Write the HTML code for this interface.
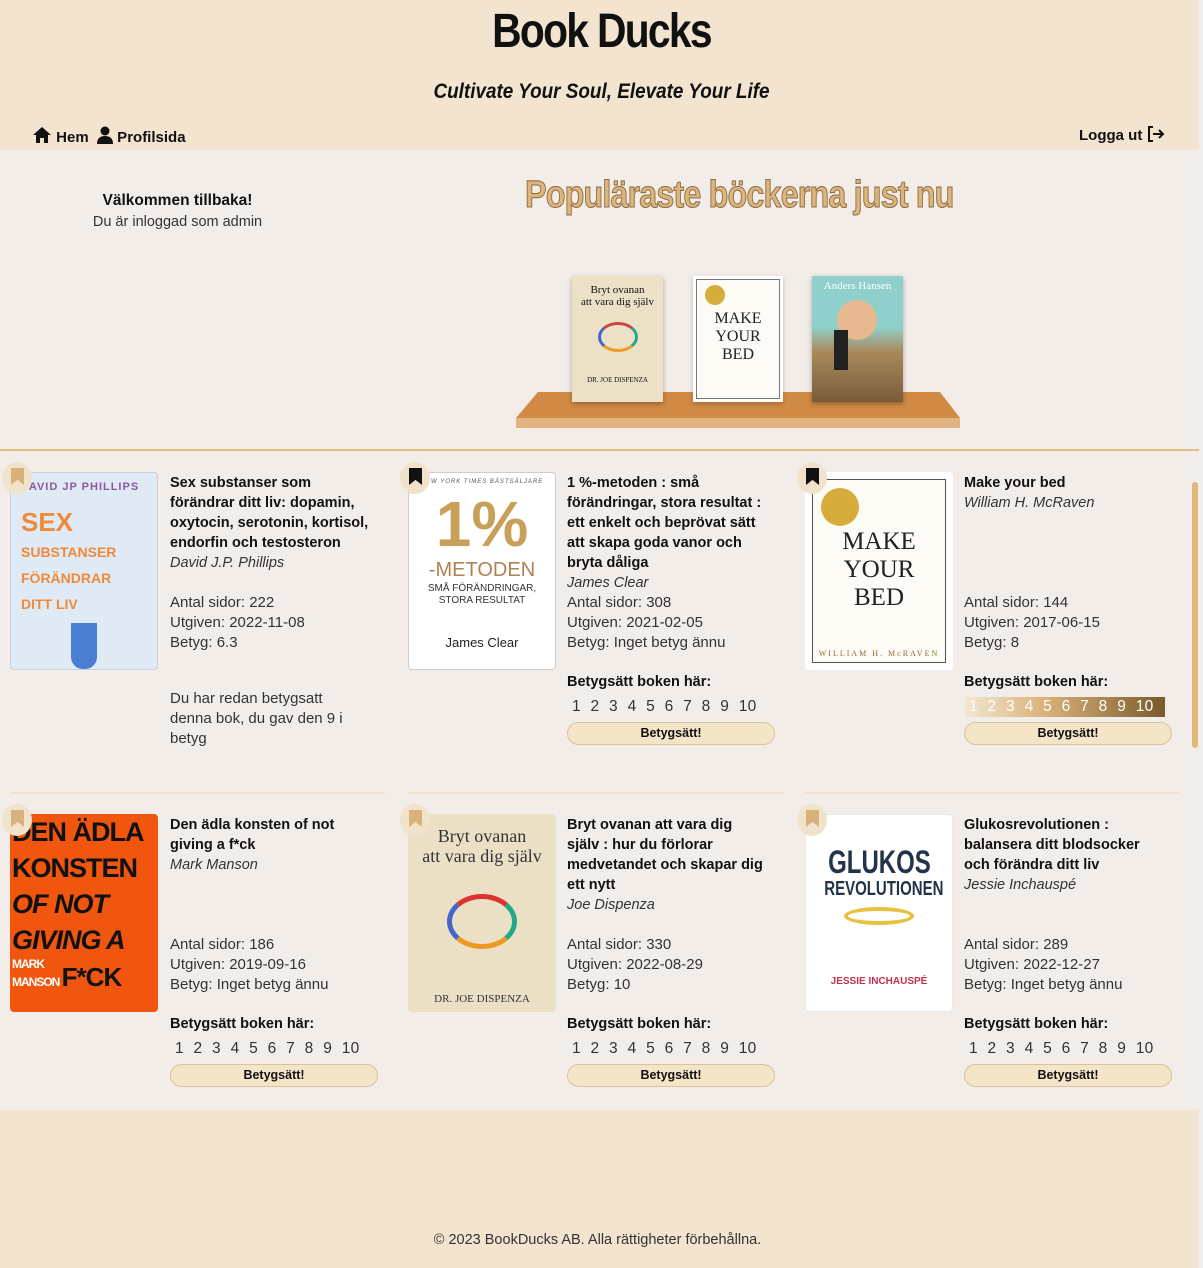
<!DOCTYPE html>
<html><head><meta charset="utf-8"><style>
*{margin:0;padding:0;box-sizing:border-box}
body{width:1203px;height:1268px;background:#f2e4cf;font-family:"Liberation Sans",sans-serif;color:#111;position:relative;overflow:hidden}
.abs{position:absolute}
header{position:absolute;left:0;top:0;width:1203px;height:150px;background:#f2e4cf;box-shadow:0 2px 4px rgba(0,0,0,.08)}
h1{position:absolute;left:0;width:1203px;top:4px;text-align:center;font-size:48px;font-weight:bold;letter-spacing:-2px;transform:scaleX(.85)}
.sub{position:absolute;left:0;width:1203px;top:80px;text-align:center;font-size:21px;font-weight:bold;font-style:italic;transform:scaleX(.9)}
nav{position:absolute;top:126px;font-size:15px;font-weight:bold}
main{position:absolute;left:0;top:150px;width:1203px;height:960px;background:#f2ede8}
.pop{position:absolute;left:525px;top:174px;font-size:38px;font-weight:bold;color:#dcb47c;-webkit-text-stroke:1px #8a6a40;letter-spacing:-1px;transform:scaleX(.85);transform-origin:left;white-space:nowrap}
.sep{position:absolute;left:0;top:449px;width:1203px;height:2px;background:#e2bf85}
.cover{position:absolute;width:148px;height:198px;border-radius:4px;overflow:hidden;text-align:center}
.bm{position:absolute;width:30px;height:32px;border-radius:50%;background:#f0e2cb}
.bm i{position:absolute;left:9px;top:6px;width:13px;height:17px;background:#d8b27a;clip-path:polygon(0 0,100% 0,100% 100%,50% 70%,0 100%)}
.bm.k i{background:#111}
.t{position:absolute;width:200px;font-size:14.5px;line-height:20px}
.t b{display:block}
.t em{color:#333;display:block}
.info{position:absolute;width:215px;font-size:15px;line-height:20px;color:#333}
.rh{position:absolute;font-size:14.5px;font-weight:bold}
.nums{position:absolute;font-size:15.5px;color:#333;word-spacing:5px;letter-spacing:.3px;white-space:nowrap}
.btn{position:absolute;width:208px;height:23px;border:1px solid #d9c29c;border-radius:12px;background:#f4e4c8;font-size:12.5px;font-weight:bold;text-align:center;line-height:21px}
.hr{position:absolute;top:792px;height:2px;background:#efe3d0;width:375px}
</style></head><body>
<header>
<h1>Book Ducks</h1>
<div class="sub">Cultivate Your Soul, Elevate Your Life</div>
<nav style="left:32px"><svg width="20" height="18" viewBox="0 0 20 18" style="vertical-align:-2px"><path d="M10 1 L19 9 H16 V17 H12 V12 H8 V17 H4 V9 H1 Z" fill="#111"/></svg> Hem &nbsp;<svg width="16" height="18" viewBox="0 0 16 18" style="vertical-align:-2px"><circle cx="8" cy="5" r="4.5" fill="#111"/><path d="M0 18 Q0 10 8 10 Q16 10 16 18Z" fill="#111"/></svg> Profilsida</nav>
<nav style="left:1079px">Logga ut <svg width="18" height="16" viewBox="0 0 18 16" style="vertical-align:-2px"><path d="M6 1 H2 V15 H6" fill="none" stroke="#111" stroke-width="2"/><path d="M6 8 H16 M12 4 L16 8 L12 12" fill="none" stroke="#111" stroke-width="2"/></svg></nav>
</header>
<main>
<div class="abs" style="left:0;width:355px;top:42px;text-align:center;font-size:15.5px;font-weight:bold">Välkommen tillbaka!</div>
<div class="abs" style="left:0;width:355px;top:64px;text-align:center;font-size:14.5px;color:#333">Du är inloggad som admin</div>
</main>
<div class="pop">Populäraste böckerna just nu</div>
<div class="abs" style="left:516px;top:392px;width:444px;height:26px;background:#d08a44;clip-path:polygon(22px 0,424px 0,100% 100%,0 100%)"></div>
<div class="abs" style="left:516px;top:418px;width:444px;height:10px;background:#e2b382"></div>
<div class="abs" style="left:572px;top:276px;width:91px;height:126px;background:#ece0c6;box-shadow:0 2px 5px rgba(0,0,0,.3);font-family:'Liberation Serif';font-size:11px;text-align:center;padding-top:8px;line-height:12px">Bryt ovanan<br>att vara dig själv<div style="margin:14px auto 0;width:40px;height:30px;border-radius:50%;border:3px solid #c44;border-color:#c44 #2a8 #e92 #46c"></div><div style="font-size:7px;margin-top:22px">DR. JOE DISPENZA</div></div>
<div class="abs" style="left:693px;top:276px;width:90px;height:126px;background:#fdfbf6;box-shadow:0 2px 5px rgba(0,0,0,.2);border:4px solid #fff;outline:1px solid #777;outline-offset:-4px;font-family:'Liberation Serif';font-size:16px;text-align:center;line-height:18px;padding-top:30px;color:#222">MAKE<br>YOUR<br>BED<div class="abs" style="left:8px;top:5px;width:20px;height:20px;border-radius:50%;background:#d6ac3a"></div></div>
<div class="abs" style="left:812px;top:276px;width:91px;height:126px;background:linear-gradient(#8fd0cc 0,#8fd0cc 40%,#a88a5c 60%,#7a5c3a);box-shadow:0 2px 5px rgba(0,0,0,.3);font-family:'Liberation Serif';font-size:11px;color:#fff;text-align:center;padding-top:4px">Anders Hansen<div style="margin:8px 0 0 25px;width:40px;height:40px;border-radius:50%;background:#e8b890"></div><div style="margin:-10px 0 0 22px;width:14px;height:40px;background:#222"></div></div>
<div class="sep"></div>

<!-- Row 1 -->
<div class="cover" style="left:10px;top:472px;background:#dfeaf5;border:1px solid #c9cfe0"><div style="color:#8a5aa0;font-weight:bold;font-size:11px;letter-spacing:1px;margin-top:8px;white-space:nowrap">AVID JP PHILLIPS</div><div style="color:#f08a3a;font-weight:bold;font-size:26px;line-height:26px;margin-top:16px;text-align:left;padding-left:10px">SEX<br><span style="font-size:14px;line-height:16px">SUBSTANSER<br>FÖRÄNDRAR<br>DITT LIV</span></div><div style="margin:10px auto 0;width:26px;height:46px;background:#4a7ed0;border-radius:0 0 12px 12px"></div></div>
<div class="bm" style="left:2px;top:462px"><i></i></div>
<div class="t" style="left:170px;top:473px"><b>Sex substanser som förändrar ditt liv: dopamin, oxytocin, serotonin, kortisol, endorfin och testosteron</b><em>David J.P. Phillips</em></div>
<div class="info" style="left:170px;top:593px">Antal sidor: 222<br>Utgiven: 2022-11-08<br>Betyg: 6.3</div>
<div class="info" style="left:170px;top:689px;width:190px">Du har redan betygsatt denna bok, du gav den 9 i betyg</div>

<div class="cover" style="left:408px;top:472px;background:#fff;border:1px solid #ccc"><div style="font-size:6px;font-style:italic;letter-spacing:1px;color:#555;margin-top:6px;white-space:nowrap">NEW YORK TIMES BÄSTSÄLJARE</div><div style="font-size:64px;font-weight:bold;color:#c9a05a;line-height:70px;margin-top:4px">1%</div><div style="font-size:20px;color:#b08050;line-height:22px">-METODEN</div><div style="font-size:10px;color:#333;line-height:12px;margin-top:2px">SMÅ FÖRÄNDRINGAR,<br>STORA RESULTAT</div><div style="font-size:13px;color:#222;margin-top:28px">James Clear</div></div>
<div class="bm k" style="left:400px;top:462px"><i></i></div>
<div class="t" style="left:567px;top:473px"><b>1 %-metoden : små förändringar, stora resultat : ett enkelt och beprövat sätt att skapa goda vanor och bryta dåliga</b><em>James Clear</em></div>
<div class="info" style="left:567px;top:593px">Antal sidor: 308<br>Utgiven: 2021-02-05<br>Betyg: Inget betyg ännu</div>
<div class="rh" style="left:567px;top:674px">Betygsätt boken här:</div>
<div class="nums" style="left:572px;top:698px">1 2 3 4 5 6 7 8 9 10</div>
<div class="btn" style="left:567px;top:722px">Betygsätt!</div>

<div class="cover" style="left:805px;top:472px;background:#fdfbf6;border:6px solid #fff;box-shadow:0 0 0 1px #eee;font-family:'Liberation Serif';font-size:25px;line-height:28px;color:#222;padding-top:50px"><div style="outline:1px solid #555;position:absolute;left:2px;top:2px;right:2px;bottom:2px"></div>MAKE<br>YOUR<br>BED<div style="font-size:8px;color:#8a7030;letter-spacing:2px;margin-top:28px;white-space:nowrap">WILLIAM H. McRAVEN</div><div class="abs" style="left:10px;top:10px;width:38px;height:38px;border-radius:50%;background:#d6ac3a"></div></div>
<div class="bm k" style="left:797px;top:462px"><i></i></div>
<div class="t" style="left:964px;top:473px"><b>Make your bed</b><em>William H. McRaven</em></div>
<div class="info" style="left:964px;top:593px">Antal sidor: 144<br>Utgiven: 2017-06-15<br>Betyg: 8</div>
<div class="rh" style="left:964px;top:674px">Betygsätt boken här:</div>
<div class="abs" style="left:965px;top:697px;width:200px;height:20px;background:linear-gradient(90deg,#f3e6d0,#d9b27a 40%,#7a5a2a)"></div>
<div class="nums" style="left:969px;top:698px;color:#fff">1 2 3 4 5 6 7 8 9 10</div>
<div class="btn" style="left:964px;top:722px">Betygsätt!</div>

<div class="hr" style="left:10px"></div><div class="hr" style="left:408px"></div><div class="hr" style="left:805px"></div>

<!-- Row 2 -->
<div class="cover" style="left:10px;top:814px;background:#f0560e;text-align:left;padding-left:2px;font-weight:bold;color:#111;font-size:27px;line-height:36px;letter-spacing:-1px;white-space:nowrap">DEN ÄDLA<br>KONSTEN<br><i>OF NOT<br>GIVING A</i><div style="font-size:12px;line-height:13px;color:#fff">MARK<br>MANSON <span style="font-size:26px;color:#111">F*CK</span></div></div>
<div class="bm" style="left:2px;top:804px"><i></i></div>
<div class="t" style="left:170px;top:815px"><b>Den ädla konsten of not giving a f*ck</b><em>Mark Manson</em></div>
<div class="info" style="left:170px;top:935px">Antal sidor: 186<br>Utgiven: 2019-09-16<br>Betyg: Inget betyg ännu</div>
<div class="rh" style="left:170px;top:1016px">Betygsätt boken här:</div>
<div class="nums" style="left:175px;top:1040px">1 2 3 4 5 6 7 8 9 10</div>
<div class="btn" style="left:170px;top:1064px">Betygsätt!</div>

<div class="cover" style="left:408px;top:814px;background:#ebe0c6;font-family:'Liberation Serif';font-size:18px;line-height:20px;color:#333;padding-top:12px">Bryt ovanan<br>att vara dig själv<div style="margin:28px auto 0;width:70px;height:55px;border-radius:50%;border:5px solid #c44;border-color:#d33 #2a8 #e92 #46c"></div><div style="font-size:11px;margin-top:40px">DR. JOE DISPENZA</div></div>
<div class="bm" style="left:400px;top:804px"><i></i></div>
<div class="t" style="left:567px;top:815px"><b>Bryt ovanan att vara dig själv : hur du förlorar medvetandet och skapar dig ett nytt</b><em>Joe Dispenza</em></div>
<div class="info" style="left:567px;top:935px">Antal sidor: 330<br>Utgiven: 2022-08-29<br>Betyg: 10</div>
<div class="rh" style="left:567px;top:1016px">Betygsätt boken här:</div>
<div class="nums" style="left:572px;top:1040px">1 2 3 4 5 6 7 8 9 10</div>
<div class="btn" style="left:567px;top:1064px">Betygsätt!</div>

<div class="cover" style="left:805px;top:814px;background:#fff;border:1px solid #e8e8e8;color:#23344a;font-weight:bold;font-size:32px;line-height:34px;padding-top:30px"><span style="display:inline-block;transform:scaleX(.75)">GLUKOS</span><div style="font-size:20px;line-height:20px;transform:scaleX(.75);white-space:nowrap">REVOLUTIONEN</div><div style="margin:8px auto 0;width:70px;height:18px;border-radius:50%;border:4px solid #e8c040"></div><div style="font-size:10px;color:#c03050;margin-top:40px">JESSIE INCHAUSPÉ</div></div>
<div class="bm" style="left:797px;top:804px"><i></i></div>
<div class="t" style="left:964px;top:815px"><b>Glukosrevolutionen : balansera ditt blodsocker och förändra ditt liv</b><em>Jessie Inchauspé</em></div>
<div class="info" style="left:964px;top:935px">Antal sidor: 289<br>Utgiven: 2022-12-27<br>Betyg: Inget betyg ännu</div>
<div class="rh" style="left:964px;top:1016px">Betygsätt boken här:</div>
<div class="nums" style="left:969px;top:1040px">1 2 3 4 5 6 7 8 9 10</div>
<div class="btn" style="left:964px;top:1064px">Betygsätt!</div>

<div class="abs" style="left:1192px;top:482px;width:6px;height:266px;border-radius:3px;background:#e0b878"></div>
<div class="abs" style="left:1199px;top:0;width:4px;height:1268px;background:#eee"></div>

<div class="abs" style="left:0;width:1195px;top:1232px;text-align:center;font-size:14.5px;color:#333">© 2023 BookDucks AB. Alla rättigheter förbehållna.</div>
</body></html>
